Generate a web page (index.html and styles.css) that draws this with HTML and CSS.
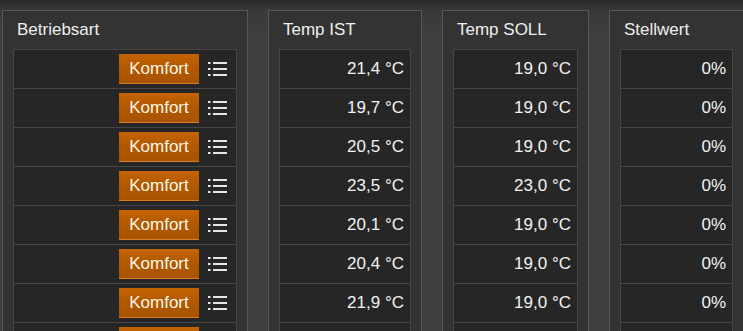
FILE: index.html
```html
<!DOCTYPE html>
<html lang="de">
  <head>
    <meta charset="UTF-8" />
    <title>Heizung</title>
    <meta name="viewport" content="width=device-width, initial-scale=1.0" />
    <link rel="stylesheet" href="styles.css">
  </head>
  <body>
    <div class="board">
      <div class="panel panel-mode">
        <div class="panel-title">Betriebsart</div>
        <div class="cells">
          <div class="cell cell-mode"><button class="mode-btn">Komfort</button><span class="list-icon"></span></div>
          <div class="cell cell-mode"><button class="mode-btn">Komfort</button><span class="list-icon"></span></div>
          <div class="cell cell-mode"><button class="mode-btn">Komfort</button><span class="list-icon"></span></div>
          <div class="cell cell-mode"><button class="mode-btn">Komfort</button><span class="list-icon"></span></div>
          <div class="cell cell-mode"><button class="mode-btn">Komfort</button><span class="list-icon"></span></div>
          <div class="cell cell-mode"><button class="mode-btn">Komfort</button><span class="list-icon"></span></div>
          <div class="cell cell-mode"><button class="mode-btn">Komfort</button><span class="list-icon"></span></div>
          <!-- next row only peeks in at the bottom edge -->
          <div class="cell cell-mode"><button class="mode-btn"></button><span class="list-icon"></span></div>
        </div>
      </div>

      <div class="panel panel-ist">
        <div class="panel-title">Temp IST</div>
        <div class="cells">
          <div class="cell">21,4 °C</div>
          <div class="cell">19,7 °C</div>
          <div class="cell">20,5 °C</div>
          <div class="cell">23,5 °C</div>
          <div class="cell">20,1 °C</div>
          <div class="cell">20,4 °C</div>
          <div class="cell">21,9 °C</div>
          <div class="cell"></div>
        </div>
      </div>

      <div class="panel panel-soll">
        <div class="panel-title">Temp SOLL</div>
        <div class="cells">
          <div class="cell">19,0 °C</div>
          <div class="cell">19,0 °C</div>
          <div class="cell">19,0 °C</div>
          <div class="cell">23,0 °C</div>
          <div class="cell">19,0 °C</div>
          <div class="cell">19,0 °C</div>
          <div class="cell">19,0 °C</div>
          <div class="cell"></div>
        </div>
      </div>

      <div class="panel panel-out">
        <div class="panel-title">Stellwert</div>
        <div class="cells">
          <div class="cell">0%</div>
          <div class="cell">0%</div>
          <div class="cell">0%</div>
          <div class="cell">0%</div>
          <div class="cell">0%</div>
          <div class="cell">0%</div>
          <div class="cell">0%</div>
          <div class="cell"></div>
        </div>
      </div>
    </div>

    <script>
      // same list icon in every row
      const iconSvg =
        '<svg width="20" height="14" viewBox="0 0 20 14">' +
        '<g fill="#e6e6e6">' +
        '<rect x="0" y="0" width="2.5" height="2"/>' +
        '<rect x="0" y="6" width="2.5" height="2"/>' +
        '<rect x="0" y="12" width="2.5" height="2"/>' +
        '<rect x="5" y="0" width="14" height="2"/>' +
        '<rect x="5" y="6" width="14" height="2"/>' +
        '<rect x="5" y="12" width="14" height="2"/>' +
        '</g></svg>';
      document.querySelectorAll(".list-icon").forEach((el) => {
        el.innerHTML = iconSvg;
      });
    </script>
  </body>
</html>
```

FILE: styles.css
```css
:root {
  --page-bg: #3f3f3f;
  --panel-bg: #333333;
  --panel-border: #585858;
  --cell-bg: #262626;
  --cell-border: #464646;
  --text: #f2f2f2;
}

html,
body {
  height: 100%;
}

body {
  margin: 0;
  overflow: hidden;
  background: linear-gradient(#2a2a2a 0, #3a3a3a 12px, var(--page-bg) 40px, var(--page-bg));
  color: var(--text);
  font-family: "Liberation Sans", Arial, sans-serif;
  font-size: 17px;
}

.board {
  display: flex;
  align-items: flex-start;
  gap: 20px;
  padding: 10px 0 0 2px;
}

.panel {
  flex: none;
  box-sizing: border-box;
  background: var(--panel-bg);
  border: 1px solid var(--panel-border);
  padding: 0 10px 10px;
}

.panel-mode { width: 246px; }
.panel-ist  { width: 154px; }
.panel-soll { width: 147px; }
.panel-out  { width: 135px; }

.panel-title {
  height: 38px;
  line-height: 38px;
  padding-left: 4px;
  color: #eeeeee;
}

.cells {
  border: 1px solid var(--cell-border);
  background: var(--cell-bg);
}

.cell {
  height: 38px;
  display: flex;
  align-items: center;
  justify-content: flex-end;
  padding-right: 6px;
  border-top: 1px solid var(--cell-border);
}

.cell:first-child {
  border-top: none;
}

.cell-mode {
  padding-right: 8px;
  gap: 9px;
}

.mode-btn {
  box-sizing: border-box;
  width: 80px;
  height: 30px;
  padding: 0;
  border: none;
  border-bottom: 1px solid #dc7d1c;
  background: linear-gradient(#c66400, #b35a00 40%, #a85300);
  color: #fff6e6;
  font-family: inherit;
  font-size: 17px;
  cursor: pointer;
}

.list-icon {
  display: flex;
  width: 20px;
  height: 14px;
}
```
